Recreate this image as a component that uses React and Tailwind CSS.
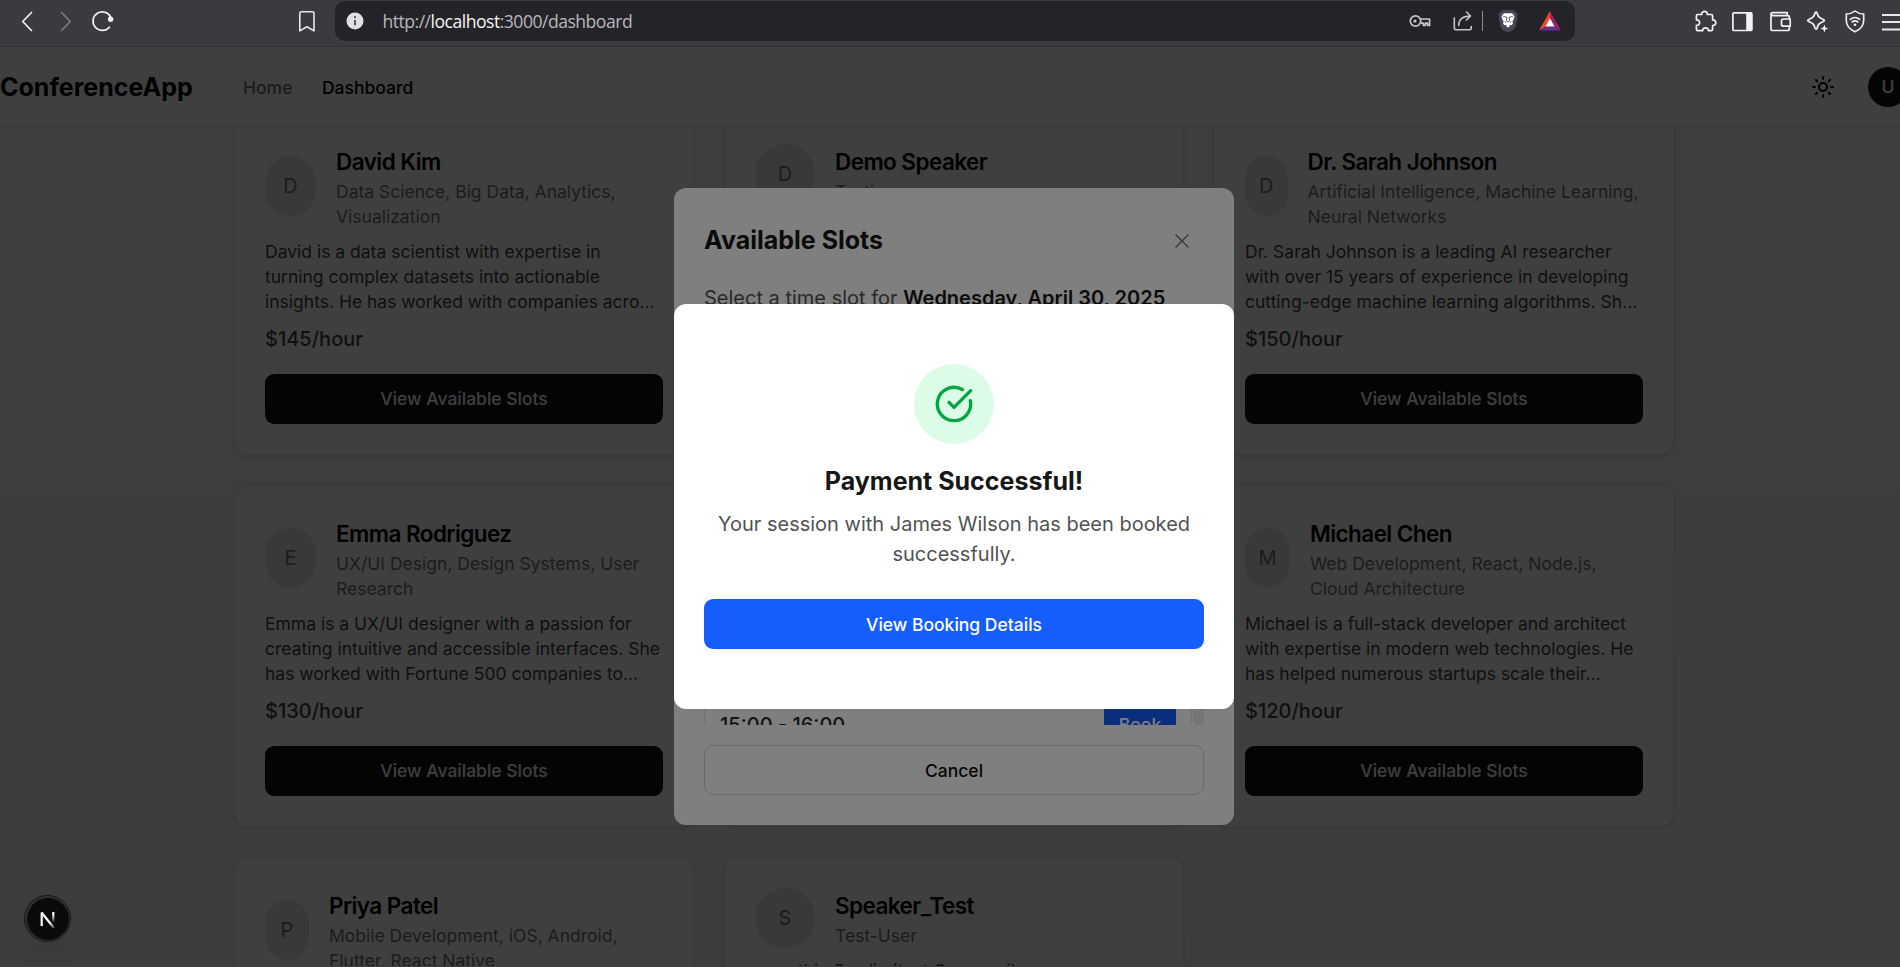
import React from "react";
import { CircleCheckBig, Sun } from "lucide-react";

const speakers = [
  { name: "David Kim", avatar: "w-[51px]", topics: ["Data Science, Big Data, Analytics,", "Visualization"], bio: ["David is a data scientist with expertise in", "turning complex datasets into actionable", "insights. He has worked with companies acro..."], price: 145 },
  { name: "Demo Speaker", avatar: "w-[60px]", topics: ["Testing"], bio: ["Demo speaker profile used for testing."], price: 100 },
  { name: "Dr. Sarah Johnson", avatar: "w-[42.5px]", topics: ["Artificial Intelligence, Machine Learning,", "Neural Networks"], bio: ["Dr. Sarah Johnson is a leading AI researcher", "with over 15 years of experience in developing", "cutting-edge machine learning algorithms. Sh..."], price: 150 },
  { name: "Emma Rodriguez", avatar: "w-[51px]", topics: ["UX/UI Design, Design Systems, User", "Research"], bio: ["Emma is a UX/UI designer with a passion for", "creating intuitive and accessible interfaces. She", "has worked with Fortune 500 companies to..."], price: 130 },
  { name: "James Wilson", avatar: "w-[51px]", topics: ["Cybersecurity, Network Security"], bio: ["James is a cybersecurity expert."], price: 160 },
  { name: "Michael Chen", avatar: "w-[45px]", topics: ["Web Development, React, Node.js,", "Cloud Architecture"], bio: ["Michael is a full-stack developer and architect", "with expertise in modern web technologies. He", "has helped numerous startups scale their..."], price: 120 },
  { name: "Priya Patel", avatar: "w-[44px]", topics: ["Mobile Development, iOS, Android,", "Flutter, React Native"], bio: ["Priya is a mobile developer."], price: 135 },
  { name: "Speaker_Test", avatar: "w-[60px]", topics: ["Test-User"], bio: ["corp this Oradis (test Gmsumail"], price: 100 },
];

function SpeakerCard({ s }) {
  return (
    <article className="flex h-[342px] flex-col rounded-[13px] border border-[#e5e5e5] bg-white p-[30px] shadow-[0_1px_4px_rgba(0,0,0,0.12)]">
      <div className="flex items-center gap-5">
        <div className={"flex h-[60px] shrink-0 items-center justify-center rounded-full bg-[#e5e5e5] text-[20px] text-[#737373] " + s.avatar + (s.topics.length > 1 ? " mb-px" : "")}>
          {s.name[0]}
        </div>
        <div>
          <h3 className="whitespace-nowrap text-[22.5px] leading-[35px] font-semibold tracking-[-0.025em] text-black">{s.name}</h3>
          {s.topics.map((t) => (
            <p key={t} className="whitespace-nowrap text-[17.5px] leading-[25px] text-[#737373]">{t}</p>
          ))}
        </div>
      </div>
      <div className="mt-2.5 whitespace-nowrap text-[17.5px] leading-[25px] text-[#404040]">
        {s.bio.map((b) => (
          <p key={b}>{b}</p>
        ))}
      </div>
      <p className="mt-2.5 text-[20px] leading-[30px] font-medium text-[#404040]">${s.price}/hour</p>
      <button className="mt-auto h-[50px] w-full shrink-0 rounded-[9px] bg-[#121212] text-[17.5px] font-medium text-[#fafafa]">View Available Slots</button>
    </article>
  );
}

function BrowserBar() {
  return (
    <div className="flex h-[47px] w-[1900px] shrink-0 items-start border-b border-[#313035] bg-[#3b3a3f]">
      <svg className="ml-[20px] mt-[9px] shrink-0" width="14" height="25" fill="none" stroke="#f2f2f4" strokeWidth="1.7" strokeLinecap="round" strokeLinejoin="round"><path d="M11.5 3.5 2.7 12.5 11.5 21.5" /></svg>
      <svg className="ml-[24px] mt-[9px] shrink-0" width="14" height="25" fill="none" stroke="#7c7b80" strokeWidth="1.7" strokeLinecap="round" strokeLinejoin="round"><path d="M3.5 3.5 12.3 12.5 3.5 21.5" /></svg>
      <svg className="ml-[18px] mt-[8px] shrink-0" width="26" height="26" fill="none" stroke="#f2f2f4" strokeWidth="1.7" strokeLinecap="round"><path d="M19.4 19.2A9.3 9.3 0 1 1 20.8 9.3" /><circle cx="20.6" cy="11.2" r="2.7" fill="#f2f2f4" stroke="none" /></svg>
      <svg className="ml-[181px] mt-[9px] shrink-0" width="20" height="25" fill="none" stroke="#e8e8ea" strokeWidth="1.6" strokeLinejoin="round"><path d="M2.8 4.5c0-1 .7-1.7 1.7-1.7h10.8c1 0 1.7.7 1.7 1.7v17.4l-7.1-4.2-7.1 4.2z" /></svg>
      <div className="mt-px ml-[18px] flex h-10 w-[1240px] shrink-0 items-center rounded-[10px] bg-[#242328]">
        <svg className="ml-[11px] shrink-0" width="18" height="18"><circle cx="9" cy="9" r="8.5" fill="#e0dfe4" /><circle cx="9" cy="5.2" r="1.1" fill="#4a494f" /><path d="M9 8v5.2" stroke="#4a494f" strokeWidth="1.8" /></svg>
        <span className="ml-[18.5px] w-[250px] shrink-0 whitespace-nowrap font-['Open_Sans','Noto_Sans',sans-serif] text-[17.6px] leading-[38px] tracking-[-0.51px] text-[#b9b8be]">
          http://<span className="text-[#f4f4f6]">localhost</span>:3000/dashboard
        </span>
        <svg className="ml-[776px] shrink-0" width="22" height="14" fill="none" stroke="#c6c5cb" strokeWidth="1.7" strokeLinejoin="round"><circle cx="6.5" cy="7" r="5.2" /><circle cx="6" cy="7" r="1.6" fill="#c6c5cb" stroke="none" /><path d="M11.3 5H20.6v6.3h-2V9.2h-2.2v2.1h-2V9.2h-3.1" /></svg>
        <svg className="ml-[21px] shrink-0" width="22" height="24" fill="none" stroke="#c6c5cb" strokeWidth="1.6" strokeLinecap="round" strokeLinejoin="round"><path d="M2.3 9v10c0 1 .7 1.7 1.7 1.7h13.5c1 0 1.7-.7 1.7-1.7v-1.5M6.7 16.5c0-6 4-9.3 11.3-9.5M14.5 3l4 4-4 4" /></svg>
        <span className="ml-[8px] h-5 w-px shrink-0 bg-[#8a898f]" />
        <svg className="ml-[15px] shrink-0" width="20" height="24" viewBox="0 0 20 24"><path d="M4.5 1h11l1.2 2 2.3.6.5 3-.7 1.4.4 2.2-2 8.3-2.2 2.5-5 2.8-5-2.8-2.2-2.5-2-8.3.4-2.2L.5 6.6 1 3.6l2.3-.6z" fill="#48475a" /><path d="M6.3 4.2h7.4l2 1.6.8 2-.6 1.8-1.5 3.2.6 2-1.7 1.5-1.5-.4-1.8 1.7-1.8-1.7-1.5.4L5 14.8l.6-2-1.5-3.2-.6-1.8.8-2z" fill="#fff" /><path d="m5.2 7.5 3.5.7M14.8 7.5l-3.5.7M8.9 8.2l-.5 3.5L10 13l1.6-1.3-.5-3.5M6.7 12.8l1.5.6M13.3 12.8l-1.5.6" stroke="#48475a" strokeWidth="0.9" fill="none" /><path d="m10 15.7 2.1 1.2L10 18.6l-2.1-1.7z" fill="#fff" /></svg>
        <svg className="ml-[21px] shrink-0" width="22" height="20" viewBox="0 0 22 20"><path d="M11 0 0 19.5l6.5-4L11 7z" fill="#ff4724" /><path d="M11 0v7l4.7 8.5 6.3 4z" fill="#9e1f63" /><path d="M0 19.5h22l-6.3-4H6.5z" fill="#662d91" /><path d="m11 7.2-4.6 8.3h9.2z" fill="#fff" /></svg>
      </div>
      <svg className="ml-[118px] mt-[9px] shrink-0" width="26" height="25" fill="none" stroke="#f2f2f4" strokeWidth="1.7" strokeLinejoin="round"><path d="M4 5.5h4.7c-.3-4.3 6-4.3 5.7 0h3.8c.9 0 1.4.5 1.4 1.4v4c4.2-.3 4.2 5.9 0 5.6v3.7c0 .9-.5 1.4-1.4 1.4h-2.8c.2-3.7-5.9-3.7-5.7 0H4.8c-.9 0-1.4-.5-1.4-1.4v-3.8c4.3.2 4.3-5.8 0-5.5V6.9c0-.9.3-1.4 1.1-1.4" /></svg>
      <svg className="ml-[12px] mt-[11px] shrink-0" width="22" height="22"><rect x="1.9" y="1.9" width="19" height="17.6" rx="1" fill="none" stroke="#f2f2f4" strokeWidth="1.7" /><path d="M15.2 1.5h5.8v18h-5.8z" fill="#f2f2f4" /></svg>
      <svg className="ml-[16px] mt-[11px] shrink-0" width="24" height="22" fill="none" stroke="#f2f2f4" strokeWidth="1.7" strokeLinejoin="round"><path d="M20.3 8V6c0-.8-.6-1.3-1.3-1.3H4.2C2.9 4.7 2 4 2 3.1s.8-1.5 2-1.5h14.2v3M2 3v14.7c0 1.1.7 1.8 1.8 1.8h14.7c1.1 0 1.8-.7 1.8-1.8v-2.5" /><path d="M21.2 8v7.2h-6.7c-1.2 0-2-.8-2-2V10c0-1.2.8-2 2-2z" /></svg>
      <svg className="ml-[13px] mt-[9px] shrink-0" width="24" height="25" fill="none" stroke="#f2f2f4" strokeWidth="1.7" strokeLinejoin="round"><path d="M10 3.2c.5 0 .8.3 1 .9 1 3.5 2 4.6 6.3 6.4 1.4.6 1.4 1.4 0 2-4.3 1.8-5.3 2.9-6.3 6.8-.3 1.2-1.5 1.2-1.9 0-1-3.9-2-5-6.3-6.8-1.4-.6-1.4-1.4 0-2C7.1 8.7 8.1 7.6 9.1 4.1c.1-.6.4-.9.9-.9z" /><path d="m18.4 15.5 1.1 2.9 2.9 1.1-2.9 1.1-1.1 2.9-1.1-2.9-2.9-1.1 2.9-1.1z" fill="#f2f2f4" stroke="none" /></svg>
      <svg className="ml-[14px] mt-[9px] shrink-0" width="22" height="25" fill="none" stroke="#f2f2f4" strokeWidth="1.6" strokeLinejoin="round" strokeLinecap="round"><path d="M11 2c2.5 2 5.2 2.9 8.7 3v6.5c0 5.3-3.2 8.8-8.7 11.3-5.5-2.5-8.7-6-8.7-11.3V5C5.8 4.9 8.5 4 11 2z" /><path d="M6.3 10.3c2.7-2.2 6.7-2.2 9.4 0M8.2 13c1.7-1.3 3.9-1.3 5.6 0" /><circle cx="11" cy="15.8" r="1.3" fill="#f2f2f4" stroke="none" /></svg>
      <svg className="ml-[16px] mt-[12px] shrink-0" width="18" height="20" stroke="#e8e8ea" strokeWidth="1.8"><path d="M0 3h18M0 10h18M0 17.5h18" /></svg>
    </div>
  );
}

function SlotsDialog() {
  return (
    <div className="absolute inset-0 flex items-start bg-black/50 pt-[141px] pl-[674px]">
      <section className="flex h-[637px] w-[560px] flex-col rounded-[12px] bg-white p-[30px]">
        <div className="flex h-[45px] items-center justify-between pr-[10px]">
          <h2 className="text-[25px] leading-[35px] font-bold text-[#171717]">Available Slots</h2>
          <svg width="24" height="24" viewBox="0 0 24 24" fill="none" stroke="#666666" strokeWidth="1.2"><path d="M5.5 5.5 18.5 18.5M18.5 5.5 5.5 18.5" /></svg>
        </div>
        <p className="mt-5 whitespace-nowrap text-[20px] leading-[30px] text-[#525252]">
          Select a time slot for <span className="font-semibold text-[#171717]">Wednesday, April 30, 2025</span>
        </p>
        <div className="mt-5 flex h-[392px] justify-between overflow-hidden">
          <div className="flex w-[488px] flex-col justify-end">
            <div className="-mb-[32px] flex h-[70px] items-center justify-between rounded-[5px] border border-[#e5e5e5] px-[15px] pt-[5px]">
              <span className="text-[20px] font-medium text-[#262626]">15:00 - 16:00</span>
              <button className="h-[40px] w-[72px] rounded-[4px] bg-[#155dfc] pt-px text-[17.5px] font-medium text-white">Book</button>
            </div>
          </div>
          <div className="w-[11px] rounded-full bg-[#ebebeb]" />
        </div>
        <button className="mt-5 h-[50px] w-full rounded-[9px] border border-[#d4d4d4] pt-[2px] text-[17.5px] font-medium text-[#0a0a0a]">Cancel</button>
      </section>
    </div>
  );
}

function PaymentDialog() {
  return (
    <div className="absolute inset-0 flex items-start bg-black/50 pt-[257px] pl-[674px]">
      <section className="flex h-[405px] w-[560px] flex-col items-center rounded-[12px] bg-white px-[30px] pt-[60px]">
        <div className="flex h-20 w-20 items-center justify-center rounded-full bg-[#dcfce7] text-[#00a63e]">
          <CircleCheckBig size={40} />
        </div>
        <h2 className="mt-5 text-[25px] leading-[35px] font-bold text-[#171717]">Payment Successful!</h2>
        <p className="mt-2.5 text-center text-[20px] leading-[30px] text-[#525252]">
          Your session with James Wilson has been booked successfully.
        </p>
        <button className="mt-[30px] h-[50px] w-full rounded-[9px] bg-[#155dfc] pt-[2px] text-[17.5px] font-medium text-white">View Booking Details</button>
      </section>
    </div>
  );
}

function DevBadge() {
  return (
    <div className="absolute top-[848px] left-[24px] flex h-[47px] w-[47px] items-center justify-center rounded-full border-[1.5px] border-[#171717] bg-[#303030] shadow-[0_16px_32px_-8px_rgba(0,0,0,0.1)]">
      <div className="flex h-[42px] w-[42px] items-center justify-center rounded-full bg-[#0a0a0a]">
        <svg width="20" height="20" viewBox="0 0 20 20" fill="none">
          <defs>
            <linearGradient id="fadeV" x1="0" y1="2" x2="0" y2="14" gradientUnits="userSpaceOnUse"><stop offset="0.3" stopColor="#fff" /><stop offset="1" stopColor="#fff" stopOpacity="0" /></linearGradient>
            <linearGradient id="fadeD" x1="4" y1="3" x2="18" y2="20" gradientUnits="userSpaceOnUse"><stop offset="0.6" stopColor="#fff" /><stop offset="1" stopColor="#fff" stopOpacity="0" /></linearGradient>
          </defs>
          <path d="M3.7 17V3.6" stroke="#fff" strokeWidth="2.2" />
          <path d="M3.5 3.5 16 19" stroke="url(#fadeD)" strokeWidth="2.2" />
          <path d="M15.3 3v12" stroke="url(#fadeV)" strokeWidth="2.2" />
        </svg>
      </div>
    </div>
  );
}

export default function App() {
  return (
    <div className="flex h-[967px] w-[1900px] flex-col overflow-hidden font-['Inter',sans-serif]">
      <BrowserBar />
      <div className="relative h-[919px] overflow-hidden bg-linear-to-b from-[#fafafa] to-[#f4f4f4]">
        <header className="relative z-10 flex h-[81px] w-[1908px] items-center border-b border-[#e5e5e5] bg-white">
          <span className="w-[193px] pt-[2px] text-[25px] font-bold whitespace-nowrap text-black">ConferenceApp</span>
          <nav className="ml-[50px] flex gap-[29.5px] pt-[2px] text-[17.5px] font-medium">
            <a className="text-[#737373]">Home</a>
            <a className="text-black">Dashboard</a>
          </nav>
          <Sun size={24} className="mr-[33px] ml-auto text-black" />
          <div className="flex h-10 w-10 items-center justify-center rounded-full bg-[#171717] pt-px text-[17.5px] font-medium text-[#fafafa]">U</div>
        </header>
        <main className="mx-auto -mt-[15px] ml-[234px] grid w-[1440px] grid-cols-3 gap-[30px]">
          {speakers.map((s) => (
            <SpeakerCard key={s.name} s={s} />
          ))}
        </main>
        <div className="absolute inset-0 z-20">
          <SlotsDialog />
          <PaymentDialog />
          <DevBadge />
        </div>
      </div>
      <div className="h-px w-full bg-[#443c3f]" />
    </div>
  );
}
